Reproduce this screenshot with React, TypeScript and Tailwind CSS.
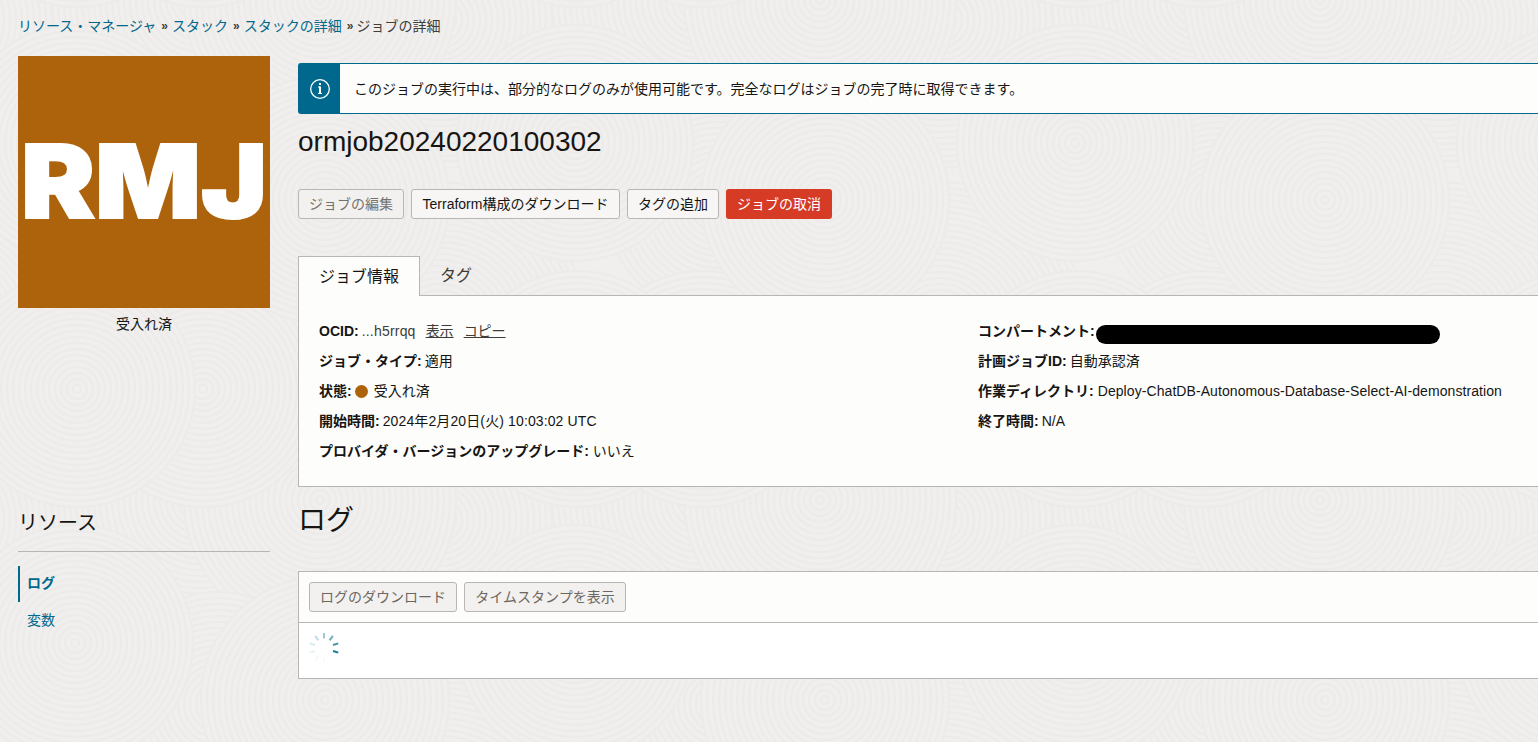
import React from 'react'

interface InfoRowProps {
    label: string
    children?: React.ReactNode
}

const breadcrumbs = ['リソース・マネージャ', 'スタック', 'スタックの詳細']

const swirls = [
    { cx: 440, cy: 20, r: 148 },
    { cx: 200, cy: 500, r: 148 },
    { cx: 440, cy: 330, r: 148 },
    { cx: 320, cy: 500, r: 136 },
    { cx: 218, cy: 204, r: 112 },
    { cx: 203, cy: 389, r: 118 },
    { cx: 77, cy: 389, r: 118 },
    { cx: 325, cy: 200, r: 124 },
    { cx: 75, cy: 143, r: 118 },
]

// every swirl is repeated around the tile so the edges join up
const offsets = [-500, 0, 500]

const Swirl = ({ cx, cy, r }: { cx: number; cy: number; r: number }) => (
    <g stroke="#ecebe9" strokeWidth="2">
        <circle cx={cx} cy={cy} r={r} fill="#f0efed" />
        {Array.from({ length: Math.floor(r / 6) }, (_, i) => (
            <circle key={i} cx={cx} cy={cy} r={r - (i + 1) * 6} fill="none" />
        ))}
    </g>
)

const Backdrop = () => (
    <svg className="absolute inset-0 -z-10 h-full w-full">
        <defs>
            <pattern
                id="swirls"
                width="500"
                height="500"
                patternUnits="userSpaceOnUse"
            >
                <rect width="500" height="500" fill="#f0efed" />
                {swirls.map((s, index) => (
                    <g key={index}>
                        {offsets.map((dx) =>
                            offsets.map((dy) => (
                                <Swirl
                                    key={`${dx},${dy}`}
                                    cx={s.cx + dx}
                                    cy={s.cy + dy}
                                    r={s.r}
                                />
                            ))
                        )}
                    </g>
                ))}
            </pattern>
        </defs>
        <rect width="100%" height="100%" fill="url(#swirls)" />
    </svg>
)

const Spinner = () => (
    <svg width="32" height="32" viewBox="-16 -16 32 32">
        {[0.4, 0.6, 0.8, 1, 0, 0.02, 0.04, 0.09, 0.15, 0.25].map(
            (opacity, index) => (
                <path
                    key={index}
                    d="M0 -9.5V-15"
                    stroke="#137a97"
                    strokeWidth="2"
                    opacity={opacity}
                    transform={`rotate(${index * 36})`}
                />
            )
        )}
    </svg>
)

const InfoRow: React.FC<InfoRowProps> = ({ label, children }) => (
    <div className="flex h-[30px] items-center whitespace-nowrap">
        <span className="mr-[3px] font-bold">{label}:</span>
        {children}
    </div>
)

const App = () => {
    return (
        <div className="relative isolate h-[742px] w-full overflow-hidden bg-[#f0efed] font-['Liberation_Sans','Noto_Sans_CJK_JP',sans-serif] text-[14px] leading-5 text-[#161513]">
            <Backdrop />
            <nav className="flex h-[56px] items-center pb-[5px] pl-[18px]">
                {breadcrumbs.map((item) => (
                    <React.Fragment key={item}>
                        <a className="text-[#00688c]">{item}</a>
                        <span className="ml-[5px] mr-[4px] text-[12px] font-bold text-[#403c38]">
                            »
                        </span>
                    </React.Fragment>
                ))}
                <span className="-ml-px text-[#403c38]">ジョブの詳細</span>
            </nav>
            <div className="flex">
                <aside className="ml-[18px] w-[252px] shrink-0">
                    <div className="h-[252px] bg-[#ac630c]">
                        <svg width="252" height="252">
                            <text
                                x="3"
                                y="162"
                                fontSize="102"
                                fontWeight="900"
                                textLength="246"
                                lengthAdjust="spacingAndGlyphs"
                                stroke="white"
                                strokeWidth="2"
                                className="fill-white font-['Inter',sans-serif]"
                            >
                                RMJ
                            </text>
                        </svg>
                    </div>
                    <p className="mt-[6px] text-center">受入れ済</p>
                    <h2 className="mt-[172px] flex h-[46px] items-center border-b border-[#b8b5b2] pb-[11px] text-[20px]">
                        リソース
                    </h2>
                    <ul className="mt-[14px] text-[#00688c]">
                        <li className="flex h-9 items-center border-l-2 border-[#00688c] pb-[2px] pl-[7px] font-bold">
                            ログ
                        </li>
                        <li className="flex h-9 items-center pl-[9px]">変数</li>
                    </ul>
                </aside>
                <main className="ml-7 min-w-0 flex-1">
                    <div className="mt-[7px] flex h-[51px] items-center rounded-l-[3px] border border-r-0 border-[#00688c] bg-[#fdfdfb]">
                        <div className="flex h-full w-[41px] items-center justify-center bg-[#00688c]">
                            <svg width="22" height="22" fill="none" stroke="white">
                                <circle cx="11" cy="11" r="9.3" strokeWidth="1.3" />
                                <path d="M9 9h2M9 15.5h4" />
                                <path d="M11 8.5V16M11 5v2" strokeWidth="2" />
                            </svg>
                        </div>
                        <p className="ml-[14px]">
                            このジョブの実行中は、部分的なログのみが使用可能です。完全なログはジョブの完了時に取得できます。
                        </p>
                    </div>
                    <h1 className="mt-[10px] text-[28px] leading-9">
                        ormjob20240220100302
                    </h1>
                    <div className="mt-[29px] flex gap-[7px]">
                        <button className="h-[30px] w-[106px] rounded-[3px] border border-[#b8b5b2] bg-[#f3f1f0] text-[#75716d]">
                            ジョブの編集
                        </button>
                        <button className="h-[30px] w-[209px] rounded-[3px] border border-[#b8b5b2] bg-[#f7f6f5]">
                            Terraform構成のダウンロード
                        </button>
                        <button className="h-[30px] w-[92px] rounded-[3px] border border-[#b8b5b2] bg-[#f7f6f5]">
                            タグの追加
                        </button>
                        <button className="h-[30px] w-[106px] rounded-[3px] bg-[#d63b25] text-white">
                            ジョブの取消
                        </button>
                    </div>
                    <div className="mt-[37px] flex h-10 text-[16px]">
                        <div className="flex w-[122px] items-center justify-center border border-b-0 border-[#b8b5b2] bg-[#fdfdfb]">
                            ジョブ情報
                        </div>
                        <div className="flex flex-1 items-center border-b border-[#b8b5b2] pl-5 text-[#403c38]">
                            タグ
                        </div>
                    </div>
                    <section className="flex h-[191px] border-b border-l border-[#b8b5b2] bg-[#fdfdfb] pt-5">
                        <div className="ml-5 w-[659px] shrink-0">
                            <InfoRow label="OCID">
                                <span className="tracking-[0.2px] text-[#403c38]">
                                    ...h5rrqq
                                </span>
                                <a className="ml-[10px] text-[#403c38] underline">表示</a>
                                <a className="ml-[10px] text-[#403c38] underline">コピー</a>
                            </InfoRow>
                            <InfoRow label="ジョブ・タイプ">適用</InfoRow>
                            <InfoRow label="状態">
                                <span className="mr-[6px] h-[13px] w-[13px] rounded-full bg-[#ac630c]" />
                                受入れ済
                            </InfoRow>
                            <InfoRow label="開始時間">
                                <span className="tracking-[0.12px]">
                                    2024年2月20日(火) 10:03:02 UTC
                                </span>
                            </InfoRow>
                            <InfoRow label="プロバイダ・バージョンのアップグレード">
                                <span className="ml-px">いいえ</span>
                            </InfoRow>
                        </div>
                        <div>
                            <InfoRow label="コンパートメント">
                                <span className="-ml-[2px] mt-[7px] h-[19px] w-[344px] rounded-full bg-black" />
                            </InfoRow>
                            <InfoRow label="計画ジョブID">自動承認済</InfoRow>
                            <InfoRow label="作業ディレクトリ">
                                <span className="ml-px tracking-[0.075px]">
                                    Deploy-ChatDB-Autonomous-Database-Select-AI-demonstration
                                </span>
                            </InfoRow>
                            <InfoRow label="終了時間">N/A</InfoRow>
                        </div>
                    </section>
                    <h2 className="mt-[14px] text-[28px] leading-10">ログ</h2>
                    <section className="mt-[30px] h-[108px] border border-r-0 border-[#b8b5b2] bg-white">
                        <div className="flex h-[51px] items-center gap-[7px] border-b border-[#b8b5b2] bg-[#fdfdfb] pl-[10px] text-[#6b6762]">
                            <button className="h-[30px] w-[148px] rounded-[3px] border border-[#b8b5b2] bg-[#f3f1f0]">
                                ログのダウンロード
                            </button>
                            <button className="h-[30px] w-[162px] rounded-[3px] border border-[#b8b5b2] bg-[#f3f1f0]">
                                タイムスタンプを表示
                            </button>
                        </div>
                        <div className="pl-[9px] pt-[9px]">
                            <Spinner />
                        </div>
                    </section>
                </main>
            </div>
        </div>
    )
}

export default App
